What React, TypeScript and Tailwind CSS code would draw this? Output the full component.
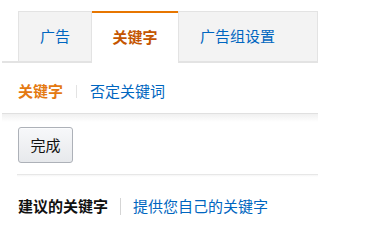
const FONT = "font-['Noto_Sans_CJK_SC','Noto_Sans',sans-serif]";

export default function App() {
  return (
    <div className={`h-[226px] w-[366px] bg-white ${FONT}`}>
      <div className="ml-[2px] w-[316px]">
        {/* top tabs */}
        <div className="flex border-b-2 border-[#e3e3e3] pl-[16px] pt-[11px]">
          <div className="-mb-[2px] flex h-[52px] w-[74px] items-center justify-center border border-b-2 border-[#e3e3e3] bg-[#f3f3f3] pb-[1px] text-[15px] text-[#0066c0]">
            广告
          </div>
          <div className="-mb-[2px] flex h-[52px] w-[86px] items-center justify-center border-t-2 border-[#e77600] bg-white pb-[1px] text-[15px] font-bold text-[#c45500]">
            关键字
          </div>
          <div className="-mb-[2px] flex h-[52px] w-[140px] items-center border border-b-2 border-[#e3e3e3] bg-[#f3f3f3] pb-[1px] pl-[21px] text-[15px] text-[#0066c0]">
            广告组设置
          </div>
        </div>

        {/* sub nav */}
        <div className="flex h-[50px] items-center pl-[16px] pt-[6px] text-[15px]">
          <span className="font-bold text-[#e47911]">关键字</span>
          <span className="mx-[13px] h-[13px] w-px bg-[#e3e3e3]" />
          <span className="text-[#0066c0]">否定关键词</span>
        </div>
        <div className="h-[9px] border-t border-[#e0e0e0] bg-gradient-to-b from-[#f0f0f0] to-white" />
      </div>

      <div className="ml-[17px] w-[301px]">
        <div className="pl-[1px] pt-[5px]">
          <button className="h-[36px] w-[55px] rounded-[3px] border border-[#adb1b8] bg-gradient-to-b from-[#f7f8fa] to-[#e7e9ec] text-[15px] text-[#111] shadow-[0_1px_0_rgba(255,255,255,0.6)_inset]">
            完成
          </button>
        </div>
        <div className="mt-[11px] h-[3px] border-t border-[#e7e7e7] bg-gradient-to-b from-[#f5f5f5] to-white" />

        <div className="mt-[18px] flex items-center pl-[1px] text-[15px]">
          <span className="font-bold text-[#111]">建议的关键字</span>
          <span className="mx-[12px] h-[17px] w-px bg-[#d5d5d5]" />
          <span className="text-[#0066c0]">提供您自己的关键字</span>
        </div>
      </div>
    </div>
  );
}
